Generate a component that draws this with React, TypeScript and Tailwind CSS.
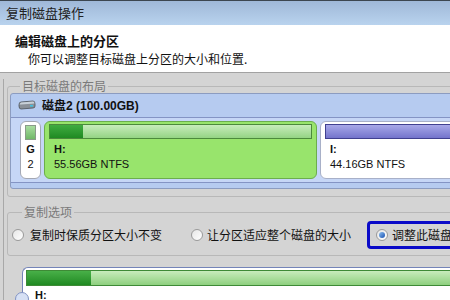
import React from "react"

const cjk = { fontFamily: '"Noto Sans CJK SC", "Liberation Sans", sans-serif' }
const latin = { fontFamily: '"Liberation Sans", "Noto Sans CJK SC", sans-serif' }

function Radio({ checked = false }: { checked?: boolean }) {
  return (
    <span className="relative flex h-[12px] w-[12px] shrink-0 items-center justify-center rounded-full border border-[#9a9a9a] bg-gradient-to-br from-[#e6e6e6] to-white">
      {checked && (
        <span className="h-[6px] w-[6px] rounded-full bg-gradient-to-br from-[#8fc0f0] to-[#1a50b0]" />
      )}
    </span>
  )
}

function DiskIcon() {
  return (
    <svg width="18" height="11" viewBox="0 0 18 11">
      <path d="M3 2 L15 1 Q17 1 17 4 L17 6 Q17 8 15 8 L3 9 Q1 9 1 6 L1 5 Q1 2 3 2 Z" fill="#8a9098" stroke="#4a5058" strokeWidth="0.8" />
      <path d="M3 2.5 L15 1.5 Q16.5 1.5 16.5 3.5 L3 4.5 Q1.5 4.5 1.5 4 Z" fill="#c8d0d8" />
      <rect x="12" y="5" width="3" height="1.6" fill="#40c0e0" />
    </svg>
  )
}

export default function App() {
  return (
    <div className="h-[300px] w-[450px] overflow-hidden bg-[#d4d4d4] text-[#111]" style={cjk}>
      {/* title bar */}
      <div className="flex h-[25px] items-center border-t border-[#3c4650] bg-gradient-to-b from-[#9fb8d8] to-[#b9d3ee] pl-[6px] text-[13px] text-[#222]">
        复制磁盘操作
      </div>

      {/* header */}
      <div className="h-[48px] border-b border-[#a2a2a2] bg-white">
        <div className="pl-[15px] pt-[7px] text-[13px] font-bold leading-[18px]">编辑磁盘上的分区</div>
        <div className="pl-[28px] text-[12px] leading-[17px]">你可以调整目标磁盘上分区的大小和位置.</div>
      </div>

      <div className="ml-[3px] h-[230px] border-l border-[#a8a8a8]">
        {/* layout groupbox */}
        <fieldset className="ml-[3px] mt-[6px] w-[600px] rounded-[3px] border border-[#b8b8b8] pb-[7px] pl-[2px]">
          <legend className="ml-[10px] px-[2px] text-[12px] leading-[14px] text-[#7a7a7a]">目标磁盘的布局</legend>
          <div className="rounded-[3px] border border-[#8c9cc0] bg-[#b6cbf0]">
            <div className="flex h-[23px] items-center gap-[6px] pl-[7px]">
              <DiskIcon />
              <span className="text-[12px] font-bold" style={latin}>
                <span style={cjk}>磁盘</span>2 (100.00GB)
              </span>
            </div>
            <div className="flex h-[66px] items-center gap-[3px] border-y border-[#8494c4] bg-[#c6d6f6] pl-[9px]">
              {/* G */}
              <div className="flex h-[58px] w-[21px] flex-col items-center rounded-[6px] border border-[#a4a8b4] bg-white pt-[3px] text-[11px] font-bold leading-[15px]" style={latin}>
                <div className="h-[15px] w-[11px] border border-[#8a9a8a] bg-gradient-to-b from-[#a8dca0] to-[#70b868]" />
                <div className="mt-[2px]">G</div>
                <div className="font-normal">2</div>
              </div>
              {/* H */}
              <div className="flex h-[58px] w-[273px] flex-col rounded-[6px] border border-[#6cae4c] bg-[#98e46c] px-[4px] pt-[2px] text-[11px] leading-[15px]" style={latin}>
                <div className="flex h-[15px] overflow-hidden border border-[#4c8a3c]">
                  <div className="w-[33px] bg-gradient-to-b from-[#40ac40] to-[#1f8a22]" />
                  <div className="flex-1 bg-gradient-to-b from-[#c8ecbc] to-[#94d484]" />
                </div>
                <div className="mt-[3px] pl-[5px] font-bold">H:</div>
                <div className="pl-[5px]">55.56GB NTFS</div>
              </div>
              {/* I */}
              <div className="flex h-[58px] w-[200px] flex-col rounded-[6px] border border-[#a8b0c8] bg-white px-[4px] pt-[2px] text-[11px] leading-[15px]" style={latin}>
                <div className="h-[15px] border border-[#404090] bg-gradient-to-b from-[#a8a8e8] to-[#7474cc]" />
                <div className="mt-[3px] pl-[5px] font-bold">I:</div>
                <div className="pl-[5px]">44.16GB NTFS</div>
              </div>
            </div>
            <div className="h-[5px]" />
          </div>
        </fieldset>

        {/* copy options groupbox */}
        <fieldset className="ml-[3px] mt-[8px] w-[600px] rounded-[3px] border border-[#b8b8b8] pb-[6px] pl-[4px]">
          <legend className="ml-[10px] px-[2px] text-[12px] leading-[14px] text-[#7a7a7a]">复制选项</legend>
          <div className="mt-[2px] flex h-[28px] items-center text-[12px]">
            <div className="flex items-center gap-[6px]">
              <Radio />
              <span>复制时保质分区大小不变</span>
            </div>
            <div className="ml-[29px] flex items-center gap-[4px]">
              <Radio />
              <span>让分区适应整个磁盘的大小</span>
            </div>
            <div className="ml-[16px] flex h-[28px] items-center gap-[4px] rounded-[4px] border-[3px] border-[#0a0ac8] pl-[6px] pr-[20px]">
              <Radio checked />
              <span>调整此磁盘上分区的大小</span>
            </div>
          </div>
        </fieldset>

        {/* resize panel */}
        <div className="relative ml-[18px] mt-[11px] h-[40px] w-[600px] rounded-tl-[6px] border-l border-t border-[#7484b8] bg-white pl-[3px] pt-[2px]">
          <div className="flex h-[16px] overflow-hidden border border-[#3e8a36]">
            <div className="w-[64px] bg-gradient-to-b from-[#48b048] to-[#1f8a22]" />
            <div className="flex-1 bg-gradient-to-b from-[#c8ecbc] to-[#8ed07e]" />
          </div>
          <div className="pl-[9px] pt-[2px] text-[11px] font-bold leading-[14px]" style={latin}>H:</div>
          <span className="absolute left-[-8px] top-[24px] h-[14px] w-[14px] rounded-full border border-[#8294c4] bg-[#d6e0f4]" />
        </div>
      </div>
    </div>
  )
}
